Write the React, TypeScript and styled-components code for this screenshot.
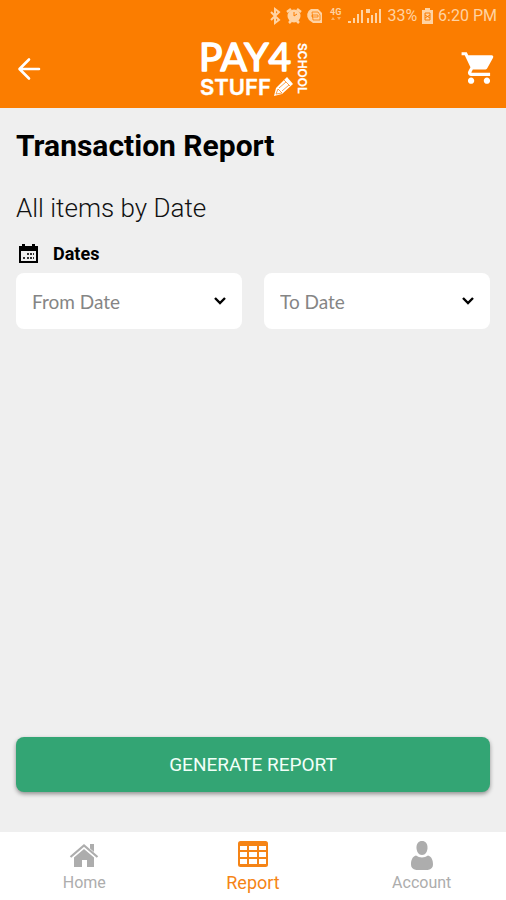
import React from "react";
import styled, { createGlobalStyle } from "styled-components";

const GlobalStyle = createGlobalStyle`
  *, *::before, *::after { box-sizing: border-box; }
  body {
    margin: 0;
    background: #efefef;
    font-family: Roboto, "Liberation Sans", sans-serif;
    color: #000;
  }
`;

const Screen = styled.div`
  min-height: 100vh;
  display: flex;
  flex-direction: column;
`;

const Header = styled.header`
  background: #fb7d00;
  color: #fff;
  padding-bottom: 4px;
`;

const StatusBar = styled.div`
  height: 32px;
  padding: 0 9px;
  display: flex;
  align-items: center;
  justify-content: flex-end;
  color: #ffd3a3;
  font-size: 16px;
  line-height: 20px;
`;

const StatusIcons = styled.svg`
  display: block;
  margin-right: 4px;
`;

const BatteryIcon = styled.svg`
  display: block;
  margin: 0 5px;
`;

const TitleBar = styled.div`
  display: grid;
  grid-template-columns: 1fr auto 1fr;
  align-items: center;
  height: 72px;
  padding: 0 8px;
`;

const IconButton = styled.button<{ $end?: boolean }>`
  justify-self: ${(p) => (p.$end ? "end" : "start")};
  display: flex;
  padding: ${(p) => (p.$end ? "0" : "0 8px")};
  border: 0;
  background: none;
  color: inherit;
  cursor: pointer;
`;

const Logo = styled.svg`
  display: block;
  overflow: visible;
  fill: #fff;
  stroke: #fff;
  stroke-linejoin: round;
  font-family: Inter, sans-serif;
  font-weight: 600;
`;

const LogoName = styled.text`
  font-family: Lato, sans-serif;
  font-size: 39px;
  font-weight: 400;
`;

const Content = styled.main`
  flex: 1;
  display: flex;
  flex-direction: column;
  padding: 20px 16px 40px;
`;

const Title = styled.h1`
  margin: 0;
  font-size: 30px;
  line-height: 36px;
  font-weight: 700;
`;

const Subtitle = styled.h2`
  margin: 26px 0 0;
  font-size: 26px;
  line-height: 36px;
  font-weight: 300;
  color: #111;
`;

const Dates = styled.fieldset`
  margin: 18px 0 0;
  padding: 0;
  border: 0;
  min-width: 0;
`;

const DatesLegend = styled.legend`
  display: flex;
  align-items: center;
  gap: 14px;
  padding: 0 2px;
  font-size: 18px;
  line-height: 20px;
  font-weight: 700;
`;

const DateFields = styled.div`
  display: grid;
  grid-template-columns: 1fr 1fr;
  gap: 22px;
  padding-top: 9px;
`;

const SelectBox = styled.div`
  display: grid;
  align-items: center;
  border-radius: 8px;
  background: #fff;

  > * { grid-area: 1 / 1; }
  > svg { justify-self: end; margin-right: 15px; pointer-events: none; }
`;

const Select = styled.select`
  appearance: none;
  width: 100%;
  height: 56px;
  padding: 0 40px 0 16px;
  border: 0;
  border-radius: 8px;
  background: transparent;
  font-family: Lato, sans-serif;
  font-size: 19px;
  color: #858585;
`;

const GenerateButton = styled.button`
  margin-top: auto;
  height: 55px;
  border: 0;
  border-radius: 8px;
  background: #33a574;
  color: #f2fff8;
  font-family: inherit;
  font-size: 19px;
  box-shadow: 0 2px 4px rgba(0, 0, 0, 0.4);
  cursor: pointer;
`;

const TabBar = styled.nav`
  display: grid;
  grid-template-columns: repeat(3, 1fr);
  height: 68px;
  background: #fff;
`;

const Tab = styled.a<{ $active?: boolean }>`
  display: flex;
  flex-direction: column;
  align-items: center;
  padding-top: 8px;
  gap: 2px;
  color: ${(p) => (p.$active ? "#f58416" : "#adadad")};
  font-size: ${(p) => (p.$active ? "18px" : "16px")};
  line-height: 22px;
  text-decoration: none;
`;

const Chevron = () => (
  <svg width="14" height="10" viewBox="0 0 14 10" fill="none" stroke="#000" strokeWidth="2.400" aria-hidden="true">
    <path d="M2 2l5 5 5-5" />
  </svg>
);

const fields = [
  { id: "from-date", label: "From Date" },
  { id: "to-date", label: "To Date" },
];

export default function App() {
  return (
    <Screen>
      <GlobalStyle />
      <Header>
        <StatusBar>
          <StatusIcons width="114" height="20" viewBox="0 0 114 20" fill="currentColor" aria-hidden="true">
            <path d="M2 6l8 8-4 3V3l4 3-8 8" fill="none" stroke="currentColor" strokeWidth="2" />
            <circle cx="25" cy="10" r="6.500" />
            <path d="M18 6l4-3M32 6l-4-3M20 17l2-2M30 17l-2-2" stroke="currentColor" strokeWidth="2.500" />
            <path d="M25 6v4l3-2" fill="none" stroke="#fb7d00" strokeWidth="1" />
            <path d="M42 3h7l4 4v10h-9l-4-3a7 7 0 0 1 2-11z" />
            <path d="M43 6h6l2 3v5h-7zM43 9h6v2h-6z" fill="none" stroke="#fb7d00" strokeWidth=".8" />
            <text x="61" y="9" fontSize="9" fontWeight="700">4G</text>
            <path d="M64 11l-2 3h4zM70 14l-2-3h4z" opacity=".6" />
            <path d="M79 15h3v2h-3zM84 12h2v5h-2zM88 8h2v9h-2zM92 4h2v13h-2zM97 3h4v4h-4zM98 12h2v5h-2zM102 9h2v8h-2zM106 7h2v10h-2zM110 3h2v14h-2z" />
          </StatusIcons>
          <span>33%</span>
          <BatteryIcon width="11" height="16" viewBox="0 0 11 16" aria-hidden="true">
            <path d="M3 0h5v2h3v14H0V2h3z" fill="currentColor" />
            <path d="M3 5h5v7H3zM3 7l5 3M8 7l-5 3" fill="none" stroke="#fb7d00" strokeWidth="1" />
          </BatteryIcon>
          <span>6:20 PM</span>
        </StatusBar>
        <TitleBar>
          <IconButton type="button" aria-label="Back">
            <svg width="26" height="26" viewBox="0 0 26 26" fill="none" stroke="currentColor" strokeWidth="2.600" strokeLinecap="round" strokeLinejoin="round">
              <path d="M23 14H4M13 4.500L3.500 14l9.500 9.500" />
            </svg>
          </IconButton>
          <Logo width="110" height="58" viewBox="0 0 110 58" role="img" aria-label="Pay 4 School Stuff">
            <LogoName x="1" y="32" strokeWidth="1.600">PAY4</LogoName>
            <text x="2" y="56" fontSize="22" strokeWidth=".4">STUFF</text>
            <text transform="translate(100 4) rotate(90)" fontSize="12" strokeWidth=".2">SCHOOL</text>
            <path d="M76 57l2-8L89 38l6 7-11 10z" stroke="none" />
            <path d="M78 55l2-5 4 4zM86 41l6 6M81 49l7-6M84 52l7-6" fill="none" stroke="#fb7d00" strokeWidth=".7" />
          </Logo>
          <IconButton type="button" $end aria-label="Shopping cart">
            <svg width="38" height="38" viewBox="0 0 24 24" fill="currentColor">
              <path d="M7 18c-1.100 0-1.990.9-1.990 2S5.900 22 7 22s2-.9 2-2-.9-2-2-2zM1 2v2h2l3.600 7.590-1.350 2.450c-.16.280-.25.610-.25.960 0 1.100.9 2 2 2h12v-2H7.420c-.14 0-.25-.11-.25-.25l.03-.12.900-1.630h7.450c.75 0 1.410-.41 1.750-1.030l3.580-6.490A1 1 0 0 0 20 4H5.210l-.94-2H1zm16 16c-1.100 0-1.990.9-1.990 2s.89 2 1.990 2 2-.9 2-2-.9-2-2-2z" />
              <path d="M6 5h14l-4 7H9z" />
            </svg>
          </IconButton>
        </TitleBar>
      </Header>

      <Content>
        <Title>Transaction Report</Title>
        <Subtitle>All items by Date</Subtitle>
        <Dates>
          <DatesLegend>
            <svg width="21" height="20" viewBox="0 0 21 20" aria-hidden="true">
              <path d="M1 2h19v17H1zM3 7v10h15V7z" fillRule="evenodd" />
              <path d="M4 0h3v3H4zM14 0h3v3h-3z" />
              <path d="M9 9h2v2H9zM12 9h2v2h-2zM15 9h1v2h-1zM5 13h2v2H5zM9 13h2v2H9zM12 13h2v2h-2zM15 13h1v2h-1z" fill="#333" />
            </svg>
            Dates
          </DatesLegend>
          <DateFields>
            {fields.map((f) => (
              <SelectBox key={f.id}>
                <Select id={f.id} aria-label={f.label} defaultValue="">
                  <option value="">{f.label}</option>
                </Select>
                <Chevron />
              </SelectBox>
            ))}
          </DateFields>
        </Dates>
        <GenerateButton type="button">GENERATE REPORT</GenerateButton>
      </Content>

      <TabBar aria-label="Main">
        <Tab href="#home">
          <svg width="30" height="30" viewBox="0 0 30 30" fill="currentColor" aria-hidden="true">
            <path d="M15 9l10 8.500V27h-7v-7h-5v7H5v-9.500z" />
            <path d="M1.500 17L15 5.500 28.500 17" fill="none" stroke="currentColor" strokeWidth="2.200" />
            <path d="M21 4h4v8l-4-3.500z" />
          </svg>
          Home
        </Tab>
        <Tab href="#report" $active aria-current="page">
          <svg width="30" height="30" viewBox="0 0 30 30" aria-hidden="true">
            <rect y="1" width="30" height="26" rx="2.500" fill="currentColor" />
            <path d="M2 6h7v4H2zM11 6h8v4h-8zM21 6h7v4h-7zM2 12h7v5H2zM11 12h8v5h-8zM21 12h7v5h-7zM2 19h7v5H2zM11 19h8v5h-8zM21 19h7v5h-7z" fill="#fff" />
          </svg>
          Report
        </Tab>
        <Tab href="#account">
          <svg width="30" height="30" viewBox="0 0 30 30" fill="currentColor" aria-hidden="true">
            <path d="M15 1c3.500 0 5.500 2.500 5.500 6.500S18.500 15 15 15s-5.500-3.500-5.500-7.500S11.500 1 15 1z" />
            <path d="M9 15.500c3.500 2.500 8.500 2.500 12 0 3.500 1 5 4.500 5 9 0 4-3 6-11 6s-11-2-11-6c0-4.500 1.500-8 5-9z" />
          </svg>
          Account
        </Tab>
      </TabBar>
    </Screen>
  );
}
